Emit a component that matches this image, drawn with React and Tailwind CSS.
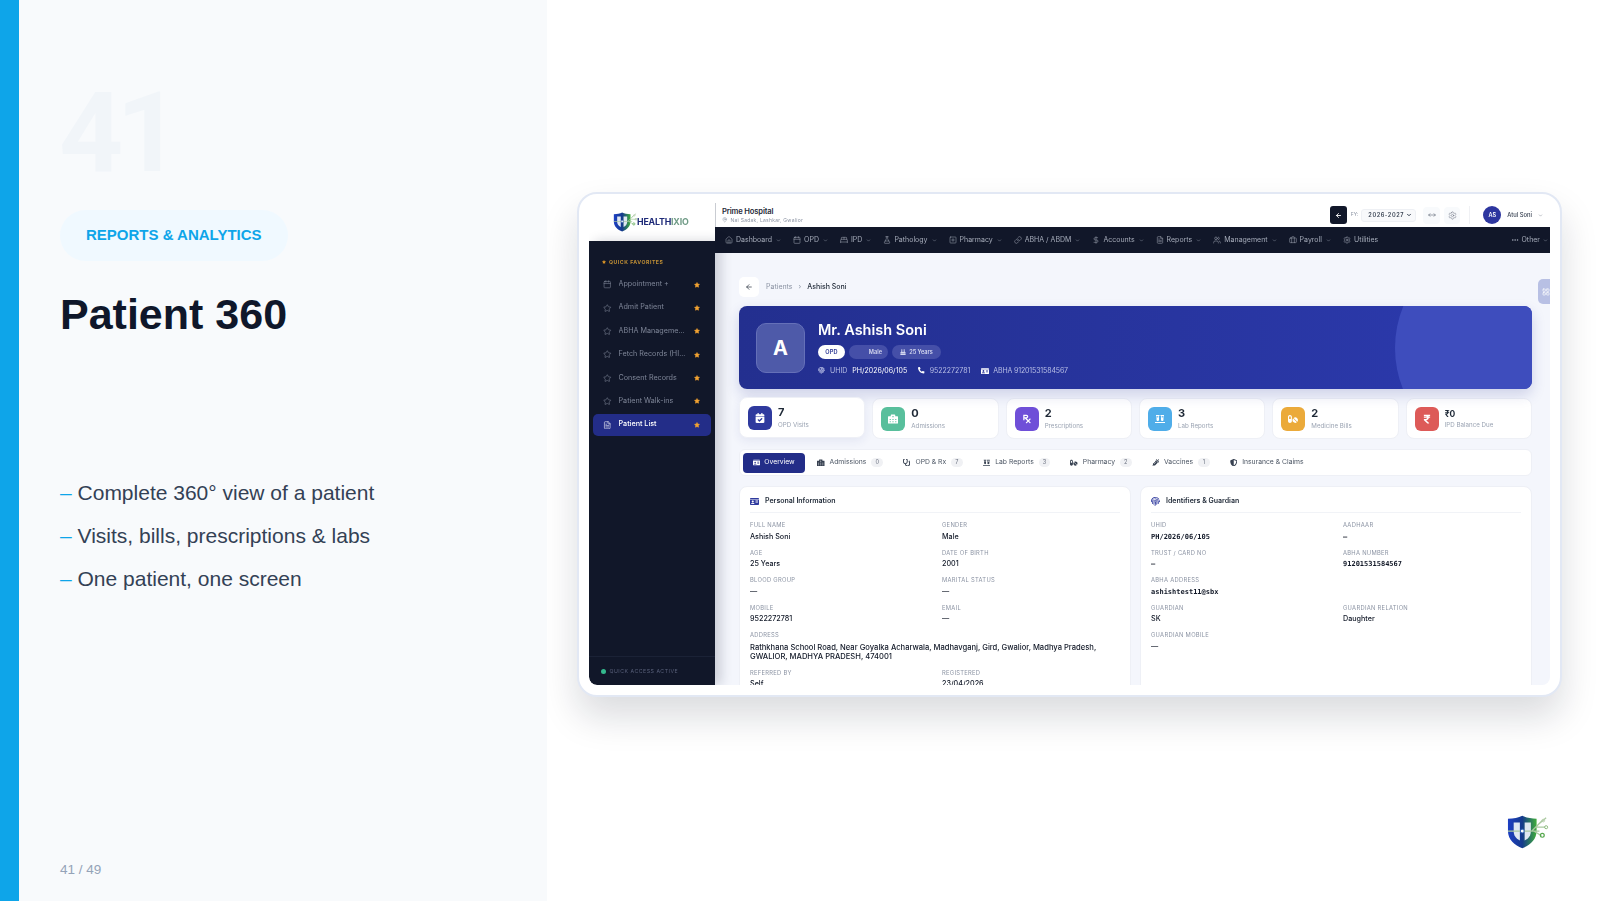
import React from "react";
import {
  House, Calendar, BedDouble, FlaskConical, SquarePlus, Link, DollarSign, FileText, Users,
  Briefcase, Settings, Ellipsis, ChevronDown, MapPin, ArrowLeft, Star, MoveHorizontal, LayoutGrid,
} from "lucide-react";
import {
  FaCalendarCheck, FaHospitalAlt, FaPrescription, FaVials, FaPills, FaRupeeSign, FaIdCard,
  FaStethoscope, FaSyringe, FaShieldAlt, FaFingerprint, FaBirthdayCake, FaPhoneAlt,
} from "react-icons/fa";

const NAV = [
  { label: "Dashboard", icon: House },
  { label: "OPD", icon: Calendar },
  { label: "IPD", icon: BedDouble },
  { label: "Pathology", icon: FlaskConical },
  { label: "Pharmacy", icon: SquarePlus },
  { label: "ABHA / ABDM", icon: Link },
  { label: "Accounts", icon: DollarSign },
  { label: "Reports", icon: FileText },
  { label: "Management", icon: Users },
  { label: "Payroll", icon: Briefcase },
  { label: "Utilities", icon: Settings, plain: true },
];

const FAVORITES = [
  { label: "Appointment +", icon: Calendar },
  { label: "Admit Patient", icon: Star },
  { label: "ABHA Manageme...", icon: Star },
  { label: "Fetch Records (HI...", icon: Star },
  { label: "Consent Records", icon: Star },
  { label: "Patient Walk-ins", icon: Star },
  { label: "Patient List", icon: FileText, active: true },
];

const STATS = [
  { value: "7", label: "OPD Visits", icon: FaCalendarCheck, tone: "bg-[#2f3a9e]", lifted: true },
  { value: "0", label: "Admissions", icon: FaHospitalAlt, tone: "bg-[#58bf9c]" },
  { value: "2", label: "Prescriptions", icon: FaPrescription, tone: "bg-[#6f4fd8]" },
  { value: "3", label: "Lab Reports", icon: FaVials, tone: "bg-[#4fade9]" },
  { value: "2", label: "Medicine Bills", icon: FaPills, tone: "bg-[#ebaa3a]" },
  { value: "₹0", label: "IPD Balance Due", icon: FaRupeeSign, tone: "bg-[#dd5a58]", small: true },
];

const TABS = [
  { label: "Admissions", icon: FaHospitalAlt, count: 0 },
  { label: "OPD & Rx", icon: FaStethoscope, count: 7 },
  { label: "Lab Reports", icon: FaVials, count: 3 },
  { label: "Pharmacy", icon: FaPills, count: 2 },
  { label: "Vaccines", icon: FaSyringe, count: 1 },
  { label: "Insurance & Claims", icon: FaShieldAlt },
];

const PERSONAL = [
  { label: "Full Name", value: "Ashish Soni" },
  { label: "Gender", value: "Male" },
  { label: "Age", value: "25 Years" },
  { label: "Date of Birth", value: "2001" },
  { label: "Blood Group", value: "—" },
  { label: "Marital Status", value: "—" },
  { label: "Mobile", value: "9522272781" },
  { label: "Email", value: "—" },
  {
    label: "Address",
    value: "Rathkhana School Road, Near Goyalka Acharwala, Madhavganj, Gird, Gwalior, Madhya Pradesh, GWALIOR, MADHYA PRADESH, 474001",
    wide: true,
  },
  { label: "Referred By", value: "Self" },
  { label: "Registered", value: "23/04/2026" },
];

const IDENTIFIERS = [
  { label: "UHID", value: "PH/2026/06/105", mono: true },
  { label: "Aadhaar", value: "—", mono: true },
  { label: "Trust / Card No", value: "—", mono: true },
  { label: "ABHA Number", value: "91201531584567", mono: true },
  { label: "ABHA Address", value: "ashishtest11@sbx", mono: true, wide: true },
  { label: "Guardian", value: "SK" },
  { label: "Guardian Relation", value: "Daughter" },
  { label: "Guardian Mobile", value: "—" },
];

const Shield = ({ className }) => (
  <svg viewBox="0 0 44 36" className={className}>
    <defs>
      <linearGradient id="shieldFill" x1="0" y1="0" x2="1" y2="0">
        <stop offset="0" stopColor="#1d3fc4" />
        <stop offset="0.5" stopColor="#153a8c" />
        <stop offset="1" stopColor="#3fae3a" />
      </linearGradient>
    </defs>
    <path d="M16 1 C20 3 25 4 31 4 L31 17 C31 26 24 32 16 35 C8 32 1 26 1 17 L1 4 C7 4 12 3 16 1 Z" fill="url(#shieldFill)" />
    <path d="M7 8 h6.5 v19 l-3 -2 C8 23 7 20 7 17 Z" fill="#dfe8f2" />
    <path d="M18.5 8 h6.5 v9 c0 3 -1 6 -3.5 8 l-3 2 Z" fill="#dfe8f2" />
    <path d="M1 17 H34 M26 17 L37 6 M30 13 H40 M28 17 L36 22 M33 10 L41 3" stroke="#a9c9a0" strokeWidth="1.3" fill="none" />
    <circle cx="16" cy="17" r="2" fill="#fff" stroke="#2b5fb8" />
    <circle cx="37" cy="21.5" r="2" fill="none" stroke="#57a84f" strokeWidth="1.3" />
    <circle cx="41" cy="13" r="1.6" fill="none" stroke="#8dbb7f" strokeWidth="1" />
    <circle cx="38" cy="6" r="1.4" fill="none" stroke="#b4cda8" strokeWidth="1" />
  </svg>
);

const Field = ({ label, value, mono, wide }) => (
  <div className={wide ? "col-span-2" : ""}>
    <p className="text-[5.8px] leading-[8px] uppercase tracking-[0.05em] text-[#8b93a3]">{label}</p>
    <p
      className={`mt-[3.5px] text-[#111827] ${
        mono
          ? "font-['DejaVu_Sans_Mono',monospace] text-[7px] leading-[8px] font-semibold"
          : wide
            ? "text-[7.6px] leading-[9px] font-medium"
            : "text-[7.2px] leading-[8px] font-medium"
      }`}
    >
      {value}
    </p>
  </div>
);

const InfoCard = ({ icon: Icon, title, fields }) => (
  <div className="flex-1 rounded-t-[8px] bg-white border border-[#eef0f6] px-[10px] pt-[9px] pb-[10px]">
    <div className="flex items-center gap-[6px] h-[10px] text-[7px] font-semibold text-[#1f2937]">
      <Icon className="w-[9px] h-[9px] text-[#2f3a9e]" />
      {title}
    </div>
    <div className="mt-[6px] mb-[8px] h-px bg-[#f1f3f7]" />
    <div className="grid grid-cols-2 gap-x-[14px] gap-y-[8.1px]">
      {fields.map((f) => (
        <Field key={f.label} {...f} />
      ))}
    </div>
  </div>
);

const Sidebar = () => (
  <aside className="w-[126px] shrink-0 flex flex-col relative z-10">
    <div className="h-[38px] flex items-center pl-[24px] gap-[3px]">
      <Shield className="w-[25px] h-[20px]" />
      <span className="-ml-[4px] text-[8.8px] font-bold tracking-[-0.02em] text-[#1e2a78]">
        HEALTH<span className="text-[#6f9b86]">IXIO</span>
      </span>
    </div>
    <div className="flex-1 bg-[#111729] rounded-bl-[8px] flex flex-col shadow-[6px_0_12px_rgba(15,23,42,0.18)]">
      <p className="mt-[17px] pl-[13px] flex items-center gap-[3px] text-[5.2px] leading-[8px] font-bold tracking-[0.1em] text-[#c08f35]">
        <Star className="w-[4px] h-[4px] fill-[#e09a2c] text-[#e09a2c]" />
        QUICK FAVORITES
      </p>
      <ul className="mt-[7.5px] pl-[4px] pr-[4px] flex flex-col gap-[1.4px]">
        {FAVORITES.map(({ label, icon: Icon, active }) => (
          <li
            key={label}
            className={`h-[22px] flex items-center pl-[10px] pr-[11px] rounded-[5px] text-[7.2px] ${
              active ? "bg-[#232d88] text-white font-medium" : "text-[#7f8698]"
            }`}
          >
            <Icon className="w-[8.5px] h-[8.5px] shrink-0" strokeWidth={1.6} />
            <span className="ml-[7px] flex-1 whitespace-nowrap overflow-hidden">{label}</span>
            <Star className="w-[6px] h-[6px] shrink-0 fill-[#f0a233] text-[#f0a233]" />
          </li>
        ))}
      </ul>
      <div className="mt-auto h-[29px] border-t border-[#1b2236] pl-[12px] pt-[11px] flex items-start gap-[4px]">
        <span className="mt-[1px] w-[4.5px] h-[4.5px] rounded-full bg-[#34b98d]" />
        <span className="text-[5.2px] leading-[7px] tracking-[0.1em] text-[#59607a]">QUICK ACCESS ACTIVE</span>
      </div>
    </div>
  </aside>
);

const TopBar = () => (
  <header className="h-[24px] flex items-center bg-white pl-[6px] pr-[7px] border-l border-[#c9ccd2]">
    <div>
      <p className="text-[7.6px] leading-[9px] font-semibold tracking-[-0.02em] text-[#1f2937]">Prime Hospital</p>
      <p className="mt-[1px] flex items-center gap-[3px] text-[5px] leading-[6px] tracking-[0.05em] text-[#8b93a3]">
        <MapPin className="w-[5.5px] h-[5.5px]" />
        Nai Sadak, Lashkar, Gwalior
      </p>
    </div>
    <button className="ml-auto w-[17px] h-[18px] rounded-[3px] bg-[#111729] flex items-center justify-center text-white">
      <ArrowLeft className="w-[7px] h-[7px]" strokeWidth={3} />
    </button>
    <span className="ml-[4px] text-[5px] text-[#8b93a3]">FY:</span>
    <div className="ml-[3px] w-[55px] h-[13px] rounded-[3px] border border-[#eef0f4] bg-[#f8f9fb] flex items-center justify-between pl-[6px] pr-[3px] text-[5.6px] font-semibold tracking-[0.1em] text-[#374151]">
      2026-2027
      <ChevronDown className="w-[6px] h-[6px]" strokeWidth={4} />
    </div>
    <span className="ml-[7px] w-[17px] h-[17px] rounded-[4px] bg-[#f8fafc] flex items-center justify-center text-[#6b7280]">
      <MoveHorizontal className="w-[8px] h-[8px]" />
    </span>
    <span className="ml-[4px] w-[16px] h-[17px] rounded-[4px] bg-[#f8fafc] flex items-center justify-center text-[#6b7280]">
      <Settings className="w-[9px] h-[9px]" strokeWidth={1.4} />
    </span>
    <span className="ml-[9px] w-px h-[18px] bg-[#f0f1f4]" />
    <span className="ml-[13px] w-[18px] h-[18px] rounded-full bg-[#2d369f] flex items-center justify-center text-[5.6px] font-semibold text-white">
      AS
    </span>
    <span className="ml-[6px] text-[5.8px] font-medium text-[#374151] whitespace-nowrap">Atul Soni</span>
    <ChevronDown className="ml-[6px] w-[5px] h-[5px] text-[#6b7280]" />
  </header>
);

const NavBar = () => (
  <nav className="h-[26px] flex items-center bg-[#111729] pl-[10px] pr-[2px] gap-[12px] text-[7px] text-[#a6acba] whitespace-nowrap">
    {NAV.map(({ label, icon: Icon, plain }) => (
      <span key={label} className="flex items-center">
        <Icon className="w-[8px] h-[8px]" strokeWidth={1.5} />
        <span className="ml-[3px]">{label}</span>
        {!plain && <ChevronDown className="ml-[4px] w-[5px] h-[5px]" />}
      </span>
    ))}
    <span className="ml-auto flex items-center">
      <Ellipsis className="w-[8px] h-[8px]" />
      <span className="ml-[3px]">Other</span>
      <ChevronDown className="ml-[3px] w-[5px] h-[5px]" />
    </span>
  </nav>
);

const Hero = () => (
  <section className="relative h-[83px] rounded-[8px] overflow-hidden bg-gradient-to-r from-[#232f8f] to-[#2c3aae] flex items-center pl-[17px] shadow-[0_6px_14px_rgba(35,47,143,0.18)]">
    <div className="absolute left-[656px] top-[-68px] w-[220px] h-[220px] rounded-full bg-[#3e4dbd]" />
    <div className="relative w-[49px] h-[50px] rounded-[10px] bg-[#4e5aa9] border border-[#6570b8] flex items-center justify-center text-[20px] font-bold text-white">
      A
    </div>
    <div className="relative ml-[13px] mt-[1px]">
      <p className="text-[14.5px] leading-[18px] font-semibold text-white">Mr. Ashish Soni</p>
      <div className="mt-[6px] flex items-center gap-[4px] text-[5.6px] font-semibold">
        <span className="h-[14px] w-[27px] rounded-full bg-white text-[#232f8f] flex items-center justify-center tracking-[0.03em]">OPD</span>
        <span className="h-[14px] w-[39px] rounded-full bg-[#454fa8] text-[#d5d8ef] flex items-center justify-end pr-[6px]">Male</span>
        <span className="h-[14px] w-[49px] rounded-full bg-[#454fa8] text-[#d5d8ef] flex items-center justify-center gap-[3px]">
          <FaBirthdayCake className="w-[6px] h-[6px]" />
          25 Years
        </span>
      </div>
      <div className="mt-[7px] flex items-center text-[7px] leading-[9px] text-[#b9bfe6] whitespace-nowrap">
        <FaFingerprint className="w-[7px] h-[7px]" />
        <span className="ml-[5px]">UHID</span>
        <span className="ml-[5px] text-white">PH/2026/06/105</span>
        <FaPhoneAlt className="ml-[11px] w-[6.5px] h-[6.5px] text-white" />
        <span className="ml-[5px]">9522272781</span>
        <FaIdCard className="ml-[11px] w-[8px] h-[8px] text-white" />
        <span className="ml-[4px] tracking-[-0.02em]">ABHA 91201531584567</span>
      </div>
    </div>
  </section>
);

const Stats = () => (
  <div className="mt-[9px] grid grid-cols-6 gap-[7px]">
    {STATS.map(({ value, label, icon: Icon, tone, small, lifted }) => (
      <div
        key={label}
        className={`h-[41px] rounded-[8px] bg-white border border-[#eef0f6] flex items-center pl-[8px] ${
          lifted ? "-translate-y-px shadow-[0_3px_10px_rgba(35,47,143,0.08)]" : ""
        }`}
      >
        <span className={`w-[24px] h-[24px] rounded-[6px] flex items-center justify-center text-white ${tone}`}>
          <Icon className="w-[10px] h-[10px]" />
        </span>
        <span className="ml-[6px]">
          <span className={`block font-bold text-[#1f2937] ${small ? "text-[8.5px] leading-[10px]" : "text-[11px] leading-[13px]"}`}>{value}</span>
          <span className="block mt-[1px] text-[6.2px] leading-[9px] text-[#9aa3b2] whitespace-nowrap">{label}</span>
        </span>
      </div>
    ))}
  </div>
);

const Tabs = () => (
  <div className="mt-[10px] h-[27px] rounded-[6px] bg-white border border-[#eef0f6] flex items-center pl-[3px] text-[6.8px] text-[#4b5563] whitespace-nowrap">
    <span className="h-[20px] w-[62px] rounded-[4px] bg-[#232d88] text-white flex items-center justify-center gap-[4px]">
      <FaIdCard className="w-[7px] h-[7px]" />
      Overview
    </span>
    <span className="ml-[12px] flex items-center gap-[20px]">
      {TABS.map(({ label, icon: Icon, count }) => (
        <span key={label} className="flex items-center">
          <Icon className="w-[7.5px] h-[7.5px] text-[#374151]" />
          <span className="ml-[5px]">{label}</span>
          {count !== undefined && (
            <span className="ml-[5px] w-[11.5px] h-[9.5px] rounded-full bg-[#f0f1f4] text-[5.6px] text-[#6b7280] flex items-center justify-center">
              {count}
            </span>
          )}
        </span>
      ))}
    </span>
  </div>
);

const Dashboard = () => (
  <div className="flex h-[482px] overflow-hidden rounded-b-[8px] font-['Inter',sans-serif] blur-[0.3px]">
    <Sidebar />
    <div className="flex-1 min-w-0 flex flex-col relative">
      <TopBar />
      <NavBar />
      <main className="flex-1 min-h-0 overflow-hidden bg-[#f4f6fc] pt-[24px] pl-[24px] pr-[18px]">
        <div className="h-[20px] flex items-center text-[7px]">
          <span className="w-[20px] h-[20px] rounded-[5px] bg-white flex items-center justify-center text-[#1f2937]">
            <ArrowLeft className="w-[8px] h-[8px]" />
          </span>
          <span className="ml-[7px] text-[#8b93a3]">Patients</span>
          <span className="mx-[6px] text-[#8b93a3]">›</span>
          <span className="font-medium text-[#1f2937]">Ashish Soni</span>
        </div>
        <div className="mt-[9px]">
          <Hero />
        </div>
        <Stats />
        <Tabs />
        <div className="mt-[10px] flex gap-[9px]">
          <InfoCard icon={FaIdCard} title="Personal Information" fields={PERSONAL} />
          <InfoCard icon={FaFingerprint} title="Identifiers & Guardian" fields={IDENTIFIERS} />
        </div>
      </main>
      {/* side handle floating over the content */}
      <div className="absolute right-0 top-[76px] w-[12px] h-[25px] rounded-l-[5px] bg-[#b8c0e4] flex items-center justify-end text-white">
        <LayoutGrid className="w-[8px] h-[8px]" />
      </div>
    </div>
  </div>
);

export default function App() {
  return (
    <div className="relative flex w-[1600px] h-[901px] overflow-hidden bg-white font-['Liberation_Sans',Arial,sans-serif]">
      <aside className="relative w-[547px] shrink-0 bg-[#f8fafc] border-l-[19px] border-[#0ea5e9] pl-[41px] pt-[73px]">
        <p className="-ml-[1px] font-['Roboto',sans-serif] text-[112px] leading-[120px] font-bold tracking-[-7px] text-[#f1f5f9]">41</p>
        <span className="mt-[17px] inline-flex items-center h-[51px] px-[26px] rounded-full bg-[#f0f9ff] text-[15px] font-bold text-[#0ea5e9]">
          REPORTS &amp; ANALYTICS
        </span>
        <h1 className="mt-[27px] text-[43px] leading-[52px] font-bold text-[#0f172a]">Patient 360</h1>
        <ul className="mt-[140px] flex flex-col gap-[17px] text-[21px] leading-[26px] text-[#334155]">
          {["Complete 360° view of a patient", "Visits, bills, prescriptions & labs", "One patient, one screen"].map((t) => (
            <li key={t}>
              <span className="text-[#0ea5e9]">–</span> {t}
            </li>
          ))}
        </ul>
        <p className="absolute left-[41px] bottom-[21px] text-[13.5px] text-[#94a3b8]">41 / 49</p>
      </aside>
      <div className="flex-1 pl-[30px] pt-[192px]">
        <div className="w-[985px] h-[505px] rounded-[20px] bg-white border-2 border-[#e2e8f4] pt-[9px] px-[10px] shadow-[0_20px_36px_rgba(15,23,42,0.15)]">
          <Dashboard />
        </div>
      </div>
      <Shield className="absolute left-[1507px] top-[814px] w-[42px] h-[36px]" />
    </div>
  );
}
